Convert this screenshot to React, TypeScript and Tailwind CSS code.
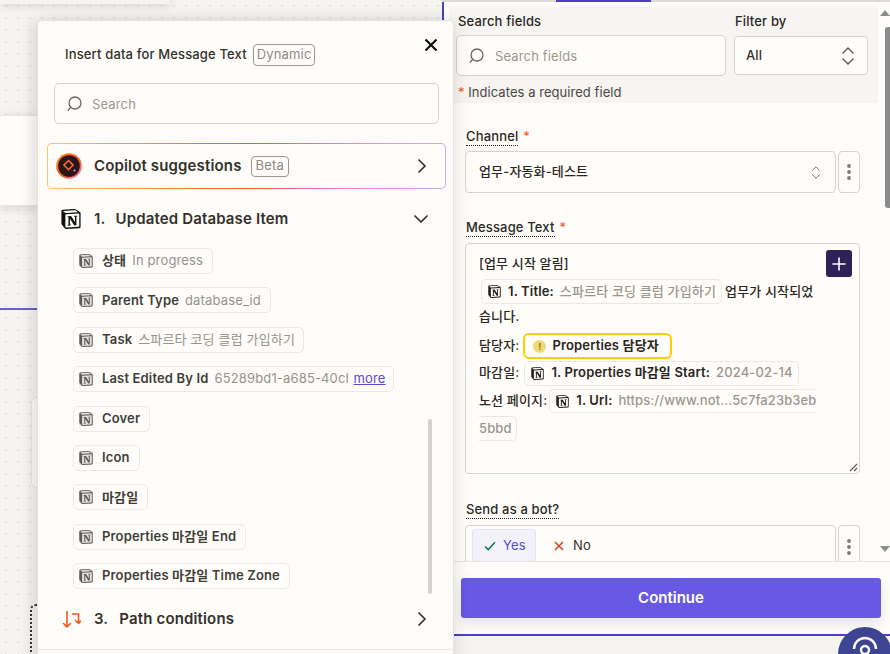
import React from "react";
import { SiNotion } from "react-icons/si";

const FONT = "[font-family:Inter,'Noto_Sans_CJK_KR',sans-serif]";

function SearchIcon() {
  return (
    <svg width="18" height="18" viewBox="0 0 18 18" fill="none" stroke="#6b6966" strokeWidth="1.35">
      <circle cx="10" cy="8" r="6" />
      <path d="M5.6 12.4 3.2 15.4" strokeLinecap="round" />
    </svg>
  );
}

function UpDown({ w = 14, h = 20, color = "#55524e" }: { w?: number; h?: number; color?: string }) {
  return (
    <svg width={w} height={h} viewBox="0 0 14 20" fill="none" stroke={color} strokeWidth="1.4">
      <path d="M2 7 7 2l5 5M2 13l5 5 5-5" strokeLinecap="round" strokeLinejoin="round" />
    </svg>
  );
}

function Kebab() {
  return (
    <svg width="4" height="16" viewBox="0 0 4 16" fill="#7d7b78">
      <circle cx="2" cy="2" r="1.9" />
      <circle cx="2" cy="8" r="1.9" />
      <circle cx="2" cy="14" r="1.9" />
    </svg>
  );
}

function ChevronRight() {
  return (
    <svg width="10" height="14" viewBox="0 0 10 14" fill="none" stroke="#33302c" strokeWidth="1.7">
      <path d="M2 1l6 6-6 6" strokeLinecap="round" strokeLinejoin="round" />
    </svg>
  );
}

function Tag({ label, value, more, w }: { label: string; value?: string; more?: boolean; w: string }) {
  return (
    <div className={`flex h-[26px] items-center rounded-[5px] border border-[#ebe9e4] bg-[#fffdf9] pl-[5px] ${w}`}>
      <SiNotion className="h-[14px] w-[14px] shrink-0 rounded-[2px] bg-[#e2e0dc] text-[#5e5c58]" />
      <span className="ml-[9px] whitespace-nowrap text-[13px] font-semibold text-[#413e3a]">{label}</span>
      {value && (
        <span className={`ml-[6px] overflow-hidden whitespace-nowrap text-[13px] text-[#95928d] ${more ? "w-[133px]" : ""}`}>{value}</span>
      )}
      {more && <span className="ml-[6px] text-[13px] text-[#5b4bd0] underline">more</span>}
    </div>
  );
}

function MsgChip({ label, value }: { label: string; value: string }) {
  return (
    <span className="ml-[2px] flex h-[25px] items-center rounded-[5px] border border-[#ebe9e4] pl-[6px] pr-[5px]">
      <SiNotion className="h-[13px] w-[13px] shrink-0 text-[#1f1d1a]" />
      <span className="ml-[7px] whitespace-nowrap font-semibold text-[#28251f]">{label}</span>
      <span className="ml-[6px] whitespace-nowrap text-[#9a9791]">{value}</span>
    </span>
  );
}

function FieldLabel({ children, star }: { children: React.ReactNode; star?: boolean }) {
  return (
    <div className="flex h-[19px] items-start">
      <span className="border-b border-dotted border-[#2b2824] text-[13px] font-medium leading-[18px] text-[#2b2824]">{children}</span>
      {star && <span className="ml-[5px] text-[13px] leading-[18px] text-[#f0561d]">*</span>}
    </div>
  );
}

export default function App() {
  return (
    <div className={`relative flex h-[654px] w-[890px] overflow-hidden bg-[#f5f4f1] tracking-[0.15px] ${FONT}`}>
      {/* canvas */}
      <div className="relative h-full w-[442px] shrink-0 bg-[radial-gradient(#e6e4df_0.8px,transparent_0.8px)] bg-[length:12px_12px]">
        <div className="absolute left-0 top-[-8px] h-[12px] w-[170px] bg-[#f5f4f1] shadow-[0_2px_10px_rgba(0,0,0,0.12)]" />
        <div className="absolute left-0 top-[115px] h-[91px] w-[60px] border-y border-[#e8e6e1] bg-[#fffdf9] shadow-[0_2px_10px_rgba(0,0,0,0.12)]" />
        <div className="absolute left-0 top-[308px] h-[2px] w-[60px] bg-[#6b5cd8]" />
        <div className="absolute left-[31px] top-[397px] h-[91px] w-[60px] rounded-[6px] border border-[#e8e6e1] bg-[#fffdf9]" />
        <div className="absolute left-[30px] top-[604px] h-[60px] w-[10px] rounded-tl-[6px] border-l-2 border-t-2 border-dotted border-[#3a3733]" />
      </div>

      {/* right panel */}
      <div className="flex h-full min-w-0 flex-1 flex-col">
        <div className="flex h-[2px] shrink-0 bg-[#dedcd7]">
          <div className="ml-[114px] h-[2px] w-[95px] bg-[#4f3fc0]" />
        </div>
        <div className="flex h-[632px] shrink-0 flex-col border-l-2 border-[#4f3fc0] bg-[#fffdf9]">
          <div className="relative flex min-h-0 flex-1 flex-col">
            <div className="ml-[5px] mr-[12px] mt-[5px] h-[96px] shrink-0 rounded-[3px] bg-[#f6f5f2] pl-[7px] pr-[8px] pt-[5px]">
              <div className="flex gap-[8px]">
                <div className="w-[270px]">
                  <div className="ml-[2px] text-[13px] font-medium leading-[18px] text-[#2b2824]">Search fields</div>
                  <div className="mt-[5px] flex h-[41px] items-center rounded-[5px] border border-[#d5d3ce] bg-[#fffdf9] pl-[10px]">
                    <SearchIcon />
                    <span className="ml-[10px] pt-[2px] text-[13px] text-[#9a9791]">Search fields</span>
                  </div>
                </div>
                <div className="w-[134px]">
                  <div className="ml-[1px] text-[13px] font-medium leading-[18px] text-[#2b2824]">Filter by</div>
                  <div className="mt-[6px] flex h-[39px] items-center justify-between rounded-[4px] border border-[#d5d3ce] bg-[#fffdf9] pl-[11px] pr-[12px]">
                    <span className="text-[13px] font-medium text-[#33302c]">All</span>
                    <UpDown />
                  </div>
                </div>
              </div>
              <div className="ml-[2px] mt-[7px] text-[13px] leading-[18px] tracking-[0.05px] text-[#4a4742]">
                <span className="text-[#f0561d]">*</span> Indicates a required field
              </div>
            </div>

            <div className="mt-[24px] min-h-0 flex-1 overflow-hidden pl-[21px] pr-[24px]">
              <div className="ml-[1px]"><FieldLabel star>Channel</FieldLabel></div>
              <div className="mt-[5px] flex gap-[2px]">
                <div className="flex h-[42px] w-[371px] items-center justify-between rounded-[4px] border border-[#d5d3ce] pl-[13px] pr-[14px]">
                  <span className="text-[13px] font-medium text-[#2b2824]">업무-자동화-테스트</span>
                  <UpDown w={10} h={15} color="#77746f" />
                </div>
                <div className="flex h-[42px] w-[22px] items-center justify-center rounded-[4px] border border-[#d5d3ce]"><Kebab /></div>
              </div>

              <div className="ml-[1px] mt-[25px]"><FieldLabel star>Message Text</FieldLabel></div>
              <div className="relative mt-[6px] h-[231px] w-[395px] rounded-[4px] border border-[#d5d3ce] pl-[13px] text-[13px] font-medium text-[#2b2824]">
                <button className="absolute right-[7px] top-[6px] flex h-[27px] w-[26px] items-center justify-center rounded-[3px] bg-[#2d2155]">
                  <svg width="14" height="14" viewBox="0 0 14 14" stroke="#fff" strokeWidth="1.6" strokeLinecap="round"><path d="M7 1v12M1 7h12" /></svg>
                </button>
                <div className="flex h-[28px] items-center pt-[12px]"><span>[업무 시작 알림]</span></div>
                <div className="mt-[7px] flex h-[25px] items-center">
                  <MsgChip label="1. Title:" value="스파르타 코딩 클럽 가입하기" />
                  <span className="ml-[3px] whitespace-nowrap">업무가 시작되었</span>
                </div>
                <div className="flex h-[26px] items-center"><span>습니다.</span></div>
                <div className="mt-[3px] flex h-[26px] items-center">
                  <span>담당자:</span>
                  <span className="ml-[4px] flex h-[26px] w-[149px] items-center rounded-[6px] border-2 border-[#ffcc00] pl-[8px]">
                    <span className="flex h-[13px] w-[13px] items-center justify-center rounded-full bg-[#f2d973] text-[9px] font-bold leading-none text-[#8a7420]">!</span>
                    <span className="ml-[6px] whitespace-nowrap font-semibold text-[#28251f]">Properties 담당자</span>
                  </span>
                </div>
                <div className="mt-[1px] flex h-[26px] items-center">
                  <span>마감일:</span>
                  <span className="ml-[3px]"><MsgChip label="1. Properties 마감일 Start:" value="2024-02-14" /></span>
                </div>
                <div className="mt-[3px] flex h-[24px] items-center">
                  <span className="whitespace-nowrap">노션 페이지:</span>
                  <span className="ml-[2px] flex h-[24px] w-[267px] items-center overflow-hidden rounded-l-[5px] border-y border-l border-[#ebe9e4] pl-[6px]">
                    <SiNotion className="h-[13px] w-[13px] shrink-0 text-[#1f1d1a]" />
                    <span className="ml-[7px] whitespace-nowrap font-semibold text-[#28251f]">1. Url:</span>
                    <span className="ml-[6px] whitespace-nowrap tracking-[0.1px] text-[#9a9791]">https://www.not...5c7fa23b3eb</span>
                  </span>
                </div>
                <div className="mt-[3px] flex h-[25px] w-[38px] items-center rounded-r-[5px] border-y border-r border-[#ebe9e4]">
                  <span className="text-[#9a9791]">5bbd</span>
                </div>
                <svg className="absolute bottom-[1px] right-[1px]" width="9" height="9" viewBox="0 0 9 9" stroke="#555" strokeWidth="1.1"><path d="M8 1 1 8M8 5 5 8" /></svg>
              </div>

              <div className="ml-[1px] mt-[26px]"><FieldLabel>Send as a bot?</FieldLabel></div>
              <div className="mt-[6px] flex gap-[2px]">
                <div className="flex h-[60px] w-[371px] rounded-[4px] border border-[#d5d3ce] pl-[6px] pt-[3px]">
                  <div className="flex h-[33px] w-[64px] items-center rounded-[3px] border border-[#e3e1f5] bg-[#f3f2fb] pl-[11px]">
                    <svg width="12" height="10" viewBox="0 0 12 10" fill="none" stroke="#13784d" strokeWidth="1.5"><path d="M1 5.5 4.2 8.6 11 1.2" /></svg>
                    <span className="ml-[7px] text-[13px] text-[#5b4bd0]">Yes</span>
                  </div>
                  <div className="ml-[18px] flex h-[33px] items-center">
                    <svg width="10" height="10" viewBox="0 0 10 10" fill="none" stroke="#d0411e" strokeWidth="1.5"><path d="M1 1l8 8M9 1 1 9" /></svg>
                    <span className="ml-[9px] text-[13px] text-[#33302c]">No</span>
                  </div>
                </div>
                <div className="flex h-[60px] w-[22px] justify-center rounded-[4px] border border-[#d5d3ce] pt-[13px]"><Kebab /></div>
              </div>
            </div>

            {/* native-looking scrollbar */}
            <div className="absolute right-0 top-[8px] h-0 w-0 border-x-[5px] border-b-[6px] border-x-transparent border-b-[#8b8b8b]" />
            <div className="absolute right-0 top-[25px] h-[181px] w-[5px] rounded-l-[3px] bg-[#8b8b8b]" />
            <div className="absolute bottom-[9px] right-0 h-0 w-0 border-x-[5px] border-t-[6px] border-x-transparent border-t-[#8b8b8b]" />
          </div>
          <div className="h-[73px] shrink-0 border-t border-[#e8e6e1] px-[17px] pt-[16px]">
            <button className="flex h-[40px] w-[420px] items-center justify-center rounded-[3px] bg-[#6759e5] text-[15px] font-semibold tracking-normal text-white shadow-[0_6px_14px_rgba(0,0,0,0.1)]">Continue</button>
          </div>
        </div>
        <div className="h-[2px] shrink-0 bg-[#4f3fc0]" />
        <div className="min-h-0 flex-1 bg-[#f5f4f1]" />
      </div>

      {/* floating help button */}
      <div className="absolute left-[838px] top-[627px] flex h-[54px] w-[54px] justify-center overflow-hidden rounded-full bg-[#3d4592] pt-[8px]">
        <svg width="28" height="28" viewBox="0 0 28 28" fill="none" stroke="#fff" strokeWidth="2.4">
          <path d="M3 14a11 11 0 0 1 22 0" />
          <circle cx="14" cy="15" r="4" />
        </svg>
      </div>

      {/* data picker popover */}
      <div className="absolute left-[37px] top-[20px] h-[650px] w-[417px] rounded-t-[5px] border border-[#e4e2dd] bg-[#fffdf9] shadow-[-6px_0_14px_rgba(0,0,0,0.1),6px_0_14px_rgba(0,0,0,0.06)]">
        <div className="flex items-center justify-between pl-[27px] pr-[15px] pt-[8px]">
          <div className="mt-[15px] flex items-center">
            <span className="text-[13px] font-medium text-[#33302c]">Insert data for Message Text</span>
            <span className="ml-[6px] flex h-[22px] items-center rounded-[4px] border border-[#9b9893] px-[3px] text-[13px] text-[#8e8b86]">Dynamic</span>
          </div>
          <svg className="mb-[6px]" width="14" height="14" viewBox="0 0 14 14" fill="none" stroke="#111" strokeWidth="2.2"><path d="M1.5 1.5l11 11M12.5 1.5l-11 11" /></svg>
        </div>
        <div className="ml-[16px] mr-[14px] mt-[17px] flex h-[41px] items-center rounded-[5px] border border-[#d5d3ce] pl-[10px]">
          <SearchIcon />
          <span className="ml-[9px] pt-[2px] text-[13px] text-[#9a9791]">Search</span>
        </div>
        <div className="ml-[9px] mr-[7px] mt-[19px] h-[46px] rounded-[5px] bg-[linear-gradient(90deg,#ffc27a,#ff8a3c_25%,#fa5a1e_50%,#f468b4_68%,#ee90e8_85%,#c9a8fa)] p-px">
          <div className="flex h-full items-center justify-between rounded-[4px] bg-[#fffdf9] pl-[8px] pr-[18px]">
            <div className="flex items-center">
              <svg width="26" height="26" viewBox="0 0 26 26">
                <defs>
                  <linearGradient id="cp" x1="0" y1="0" x2="1" y2="1">
                    <stop offset="0" stopColor="#ff8a1e" />
                    <stop offset="0.55" stopColor="#fa5a1e" />
                    <stop offset="1" stopColor="#f07ae0" />
                  </linearGradient>
                </defs>
                <circle cx="13" cy="13" r="12.8" fill="url(#cp)" />
                <circle cx="13" cy="13" r="10.8" fill="#2a1518" />
                <path d="M12.5 7.5l4.6 4.6-4.6 4.6-4.6-4.6z" fill="none" stroke="#ff6a2a" strokeWidth="1.5" />
                <circle cx="18.5" cy="17.5" r="1" fill="#f7a5e6" />
              </svg>
              <span className="ml-[12px] text-[15px] font-semibold text-[#33302c]">Copilot suggestions</span>
              <span className="ml-[9px] flex h-[21px] items-center rounded-[4px] border border-[#9b9893] px-[4px] text-[13px] text-[#8e8b86]">Beta</span>
            </div>
            <ChevronRight />
          </div>
        </div>
        <div className="mt-[17px] flex h-[26px] items-center justify-between pl-[23px] pr-[24px]">
          <div className="flex items-center text-[15px] font-semibold text-[#33302c]">
            <SiNotion className="h-[20px] w-[20px] text-[#111]" />
            <span className="ml-[13px]">1.</span>
            <span className="ml-[10px]">Updated Database Item</span>
          </div>
          <svg width="16" height="10" viewBox="0 0 16 10" fill="none" stroke="#33302c" strokeWidth="1.7"><path d="M2 2l6 6 6-6" strokeLinecap="round" strokeLinejoin="round" /></svg>
        </div>
        <div className="relative mt-[16px] flex h-[348px] flex-col items-start gap-[13.4px] pl-[35px]">
          <Tag label="상태" value="In progress" w="w-[140px]" />
          <Tag label="Parent Type" value="database_id" w="w-[198px]" />
          <Tag label="Task" value="스파르타 코딩 클럽 가입하기" w="w-[231px]" />
          <Tag label="Last Edited By Id" value="65289bd1-a685-40cb" more w="w-[321px]" />
          <Tag label="Cover" w="w-[77px]" />
          <Tag label="Icon" w="w-[67px]" />
          <Tag label="마감일" w="w-[75px]" />
          <Tag label="Properties 마감일 End" w="w-[173px]" />
          <Tag label="Properties 마감일 Time Zone" w="w-[217px]" />
          <div className="absolute left-[390px] top-[171px] h-[175px] w-[4px] rounded-[2px] bg-[#d5d3ce]" />
        </div>
        <div className="flex h-[54px] items-start justify-between border-b border-[#e8e6e1] pl-[24px] pr-[26px]">
          <div className="flex h-[46px] items-center text-[15px] font-semibold text-[#33302c]">
            <svg width="19" height="19" viewBox="0 0 19 19" fill="none" stroke="#f0561d" strokeWidth="1.6" strokeLinecap="round" strokeLinejoin="round">
              <path d="M5 1.5v15.5M1.5 13.5 5 17l3.5-3.5M10.5 4h6v9M13.5 10.5 16.5 13.5l2-2.5" />
            </svg>
            <span className="ml-[13px]">3.</span>
            <span className="ml-[11px]">Path conditions</span>
          </div>
          <div className="flex h-[46px] items-center"><ChevronRight /></div>
        </div>
      </div>
    </div>
  );
}
